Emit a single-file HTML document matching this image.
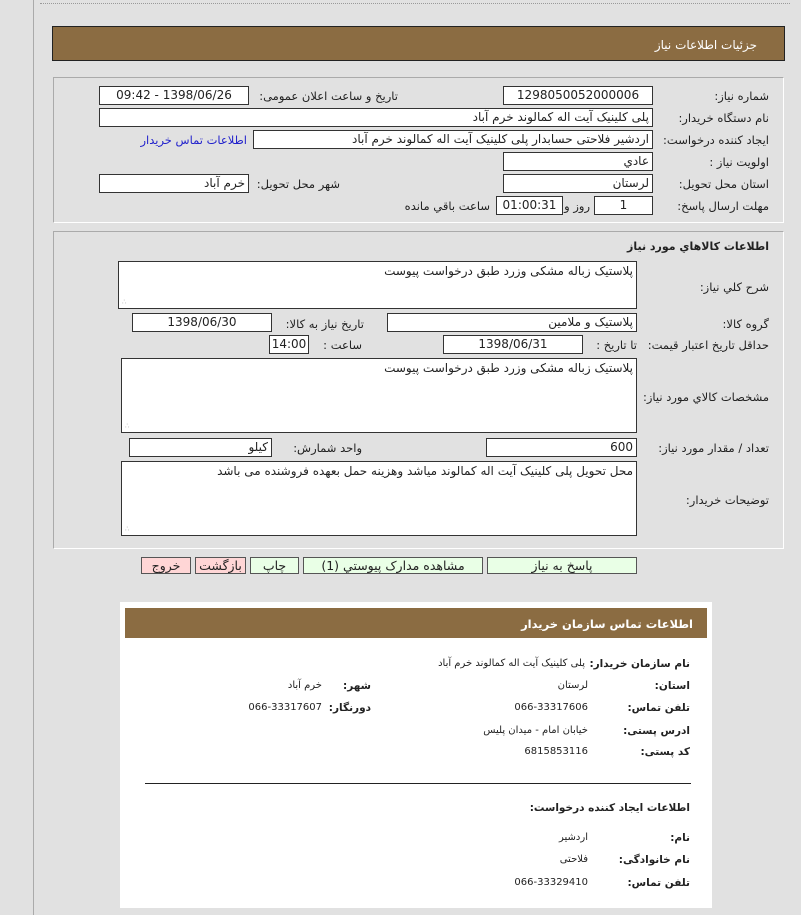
<!DOCTYPE html>
<html><head><meta charset="utf-8"><style>
*{margin:0;padding:0;box-sizing:border-box}
body{width:801px;height:915px;background:#e1e1e1;position:relative;overflow:hidden;font-family:"DejaVu Sans","Liberation Sans",sans-serif;font-size:11.5px;color:#222}
.a{position:absolute}
.t{position:absolute;direction:rtl;white-space:nowrap;line-height:14px}
.b{position:absolute;background:#fff;border:1px solid #333;direction:rtl;white-space:nowrap;padding:0 3px;line-height:16px;font-size:12px;overflow:hidden}
.c{text-align:center}
.btn{position:absolute;border:1px solid #555;height:17px;line-height:15px;text-align:center;font-size:12.5px;direction:rtl}
.g{background:#e9ffe6}.p{background:#ffd6d6}
.bo{font-weight:bold;font-size:11px}
.w .bo{font-size:10.5px}
.rs{position:absolute;left:3px;bottom:2px;color:#aaa;font-size:7px;line-height:7px}
</style></head><body>
<div class="a" style="left:40px;top:3px;width:750px;border-top:1px dotted #999"></div>
<div class="a" style="left:33px;top:0;width:1px;height:915px;background:#aaa"></div>
<div class="a" style="left:52px;top:26px;width:733px;height:35px;background:#8b6c42;border:1px solid #222"></div>
<div class="t" style="right:44px;top:38px;color:#fff;font-size:12px">جزئیات اطلاعات نیاز</div>

<div class="a" style="left:53px;top:77px;width:731px;height:146px;border:1px solid #aaa;border-right-color:#fff;border-bottom-color:#fff"></div>
<div class="t" style="right:32px;top:89px">شماره نیاز:</div>
<div class="b c" style="left:503px;top:86px;width:150px;height:19px">1298050052000006</div>
<div class="t" style="right:403px;top:89px">تاریخ و ساعت اعلان عمومی:</div>
<div class="b c" style="left:99px;top:86px;width:150px;height:19px">1398/06/26 - 09:42</div>
<div class="t" style="right:32px;top:111px">نام دستگاه خریدار:</div>
<div class="b" style="left:99px;top:108px;width:554px;height:19px">پلی کلینیک آیت اله کمالوند خرم آباد</div>
<div class="t" style="right:32px;top:133px">ایجاد کننده درخواست:</div>
<div class="b" style="left:253px;top:130px;width:400px;height:19px">اردشیر فلاحتی حسابدار پلی کلینیک آیت اله کمالوند خرم آباد</div>
<div class="t" style="right:554px;top:133px;color:#22c">اطلاعات تماس خریدار</div>
<div class="t" style="right:32px;top:155px">اولویت نیاز :</div>
<div class="b" style="left:503px;top:152px;width:150px;height:19px">عادي</div>
<div class="t" style="right:32px;top:177px">استان محل تحویل:</div>
<div class="b" style="left:503px;top:174px;width:150px;height:19px">لرستان</div>
<div class="t" style="right:461px;top:177px">شهر محل تحویل:</div>
<div class="b" style="left:99px;top:174px;width:150px;height:19px">خرم آباد</div>
<div class="t" style="right:32px;top:199px">مهلت ارسال پاسخ:</div>
<div class="b c" style="left:594px;top:196px;width:59px;height:19px">1</div>
<div class="t" style="right:211px;top:199px">روز و</div>
<div class="b c" style="left:496px;top:196px;width:67px;height:19px">01:00:31</div>
<div class="t" style="right:311px;top:199px">ساعت باقي مانده</div>

<div class="a" style="left:53px;top:231px;width:731px;height:318px;border:1px solid #aaa;border-right-color:#fff;border-bottom-color:#fff"></div>
<div class="t bo" style="right:32px;top:240px">اطلاعات كالاهاي مورد نياز</div>
<div class="t" style="right:32px;top:280px">شرح كلي نياز:</div>
<div class="b" style="left:118px;top:261px;width:519px;height:48px;line-height:18px">پلاستیک زباله مشکی وزرد طبق درخواست پیوست<span class="rs">∴</span></div>
<div class="t" style="right:32px;top:317px">گروه کالا:</div>
<div class="b" style="left:387px;top:313px;width:250px;height:19px">پلاستیک و ملامین</div>
<div class="t" style="right:437px;top:317px">تاریخ نیاز به کالا:</div>
<div class="b c" style="left:132px;top:313px;width:140px;height:19px">1398/06/30</div>
<div class="t" style="right:32px;top:338px">حداقل تاریخ اعتبار قیمت:</div>
<div class="t" style="right:164px;top:338px">تا تاریخ :</div>
<div class="b c" style="left:443px;top:335px;width:140px;height:19px">1398/06/31</div>
<div class="t" style="right:439px;top:338px">ساعت :</div>
<div class="b c" style="left:269px;top:335px;width:40px;height:19px;padding:0">14:00</div>
<div class="t" style="right:32px;top:390px">مشخصات كالاي مورد نياز:</div>
<div class="b" style="left:121px;top:358px;width:516px;height:75px;line-height:18px">پلاستیک زباله مشکی وزرد طبق درخواست پیوست<span class="rs">∴</span></div>
<div class="t" style="right:32px;top:441px">تعداد / مقدار مورد نیاز:</div>
<div class="b" style="left:486px;top:438px;width:151px;height:19px">600</div>
<div class="t" style="right:439px;top:441px">واحد شمارش:</div>
<div class="b" style="left:129px;top:438px;width:143px;height:19px">کیلو</div>
<div class="t" style="right:32px;top:493px">توضیحات خریدار:</div>
<div class="b" style="left:121px;top:461px;width:516px;height:75px;line-height:18px">محل تحویل پلی کلینیک آیت اله کمالوند میاشد وهزینه حمل بعهده فروشنده می باشد<span class="rs">∴</span></div>

<div class="btn g" style="left:487px;top:557px;width:150px">پاسخ به نیاز</div>
<div class="btn g" style="left:303px;top:557px;width:180px">مشاهده مدارک پیوستي (1)</div>
<div class="btn g" style="left:250px;top:557px;width:49px">چاپ</div>
<div class="btn p" style="left:195px;top:557px;width:51px">بازگشت</div>
<div class="btn p" style="left:141px;top:557px;width:50px">خروج</div>

<div class="w">
<div class="a" style="left:120px;top:602px;width:592px;height:306px;background:#fff"></div>
<div class="a" style="left:125px;top:608px;width:582px;height:30px;background:#8b6c42"></div>
<div class="t bo" style="right:108px;top:617px;color:#fff;font-size:11.5px">اطلاعات تماس سازمان خریدار</div>
<div class="t bo" style="right:111px;top:657px">نام سازمان خریدار:</div>
<div class="t" style="right:216px;top:657px;font-size:10px">پلی کلینیک آیت اله کمالوند خرم آباد</div>
<div class="t bo" style="right:111px;top:679px">استان:</div>
<div class="t" style="right:213px;top:679px;font-size:10px">لرستان</div>
<div class="t bo" style="right:430px;top:679px">شهر:</div>
<div class="t" style="right:479px;top:679px;font-size:10px">خرم آباد</div>
<div class="t bo" style="right:111px;top:701px">تلفن تماس:</div>
<div class="t" style="right:213px;top:701px;font-size:10px">066-33317606</div>
<div class="t bo" style="right:430px;top:701px">دورنگار:</div>
<div class="t" style="right:479px;top:701px;font-size:10px">066-33317607</div>
<div class="t bo" style="right:111px;top:724px">ادرس پستی:</div>
<div class="t" style="right:213px;top:724px;font-size:10px">خیابان امام - میدان پلیس</div>
<div class="t bo" style="right:111px;top:745px">کد پستی:</div>
<div class="t" style="right:213px;top:745px;font-size:10px">6815853116</div>
<div class="a" style="left:145px;top:783px;width:546px;height:1px;background:#222"></div>
<div class="t bo" style="right:111px;top:801px">اطلاعات ایجاد کننده درخواست:</div>
<div class="t bo" style="right:111px;top:831px">نام:</div>
<div class="t" style="right:213px;top:831px;font-size:10px">اردشیر</div>
<div class="t bo" style="right:111px;top:853px">نام خانوادگی:</div>
<div class="t" style="right:213px;top:853px;font-size:10px">فلاحتی</div>
<div class="t bo" style="right:111px;top:876px">تلفن تماس:</div>
<div class="t" style="right:213px;top:876px;font-size:10px">066-33329410</div>
</div>
</body></html>
